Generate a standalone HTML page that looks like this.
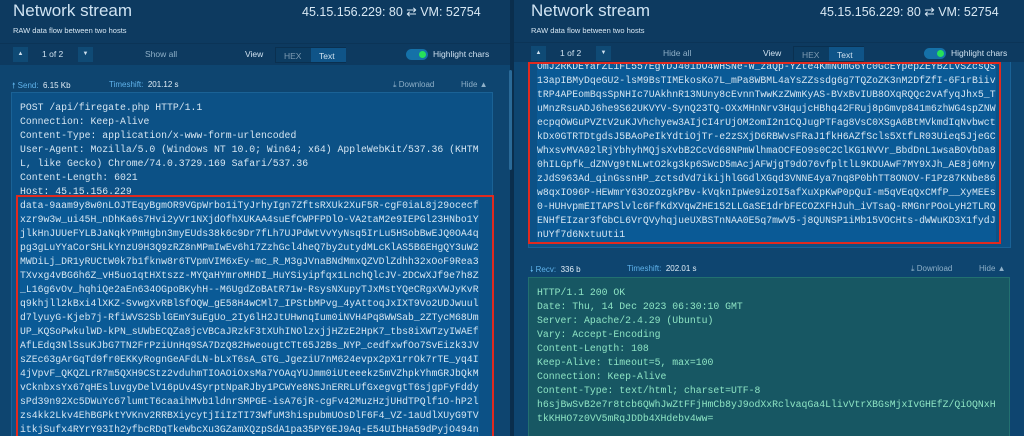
<!DOCTYPE html><html><head><meta charset="utf-8"><style>
*{margin:0;padding:0;box-sizing:border-box}
body{width:1024px;height:436px;overflow:hidden;background:#0a2e4d;font-family:"Liberation Sans",sans-serif;position:relative}
.p{position:absolute;top:0;height:436px;background:#0d3a60;overflow:hidden}
.t{position:absolute;left:13px;top:1px;font-size:17px;color:#cfe3f2;white-space:nowrap}
.s{position:absolute;left:13px;top:26px;font-size:7.5px;color:#d8e8f4}
.ip{position:absolute;top:4px;font-size:12.5px;color:#d8e8f4;white-space:nowrap}
.tb{position:absolute;left:0;right:0;top:43px;height:22px;background:#0d3a60;border-top:1px solid #0b3457;z-index:2}
.tb span{position:absolute;top:5px;font-size:8.5px;color:#d0e2f0}
.btn{position:absolute;top:3px;width:15px;height:15px;background:#0f4a75;color:#cfe0ee;font-size:6px;text-align:center;line-height:15px}
.seg{position:absolute;top:3px;height:16px;border:1px solid #0a3050;background:#0c3c62;font-size:8.5px}
.tog{position:absolute;top:5px;width:22px;height:11px;border-radius:6px;background:#1571a8}
.tog:after{content:"";position:absolute;right:2px;top:2px;width:7px;height:7px;border-radius:50%;background:#27e05a}
.body{position:absolute;left:0;right:0;top:65px;bottom:0;background:#0e4570;overflow:hidden}
.hdr{position:absolute;font-size:8px;color:#5fb2ea}
.hdr b{color:#e2eef7;font-weight:normal}
.code{position:absolute;font-family:"Liberation Mono",monospace;font-size:9.8px;line-height:14px;white-space:pre;color:#d6e6f2;padding:8px 0 0 8px;overflow:hidden}
.blue{background:#0c5186;border:1px solid #1a6296}
.red{position:absolute;border:2px solid #e02a1f}
.hl{background:#0a5a96;display:inline-block}
.grn{background:#175763;border:1px solid #227070;color:#8de3c3}
.sb{position:absolute;width:3px;background:#2a6a98;border-radius:2px}
</style></head><body>
<div class="p" style="left:0;width:510px">
<div class="t">Network stream</div><div class="s">RAW data flow between two hosts</div>
<div class="ip" style="left:302px">45.15.156.229: 80 ⇄ VM: 52754</div>
<div class="tb">
<div class="btn" style="left:13px">▲</div><span style="left:42px">1 of 2</span><div class="btn" style="left:78px">▼</div>
<span style="left:145px;color:#8fb0c8">Show all</span><span style="left:245px">View</span>
<div class="seg" style="left:275px;width:71px"><span style="left:8px;top:3px;color:#7f9cb3">HEX</span><span style="left:35px;top:0;height:14px;width:35px;background:#0f5488;padding:3px 0 0 8px">Text</span></div>
<div class="tog" style="left:406px"></div><span style="left:433px">Highlight chars</span>
</div>
<div class="body">
<div class="hdr" style="left:12px;top:15px">🠕 Send: &nbsp;<b>6.15 Kb</b></div>
<div class="hdr" style="left:109px;top:15px">Timeshift: &nbsp;<b>201.12 s</b></div>
<div class="hdr" style="left:393px;top:15px;color:#8fb0c8">⤓ Download</div>
<div class="hdr" style="left:461px;top:15px;color:#8fb0c8">Hide ▲</div>
<div class="code blue" style="left:11px;top:27px;width:482px;height:360px">POST /api/firegate.php HTTP/1.1
Connection: Keep-Alive
Content-Type: application/x-www-form-urlencoded
User-Agent: Mozilla/5.0 (Windows NT 10.0; Win64; x64) AppleWebKit/537.36 (KHTM
L, like Gecko) Chrome/74.0.3729.169 Safari/537.36
Content-Length: 6021
Host: 45.15.156.229
<span class="hl">data-9aam9y8w0nLOJTEqyBgmOR9VGpWrbo1iTyJrhyIgn7ZftsRXUk2XuF5R-cgF0iaL8j29ocecf
xzr9w3w_ui45H_nDhKa6s7Hvi2yVr1NXjdOfhXUKAA4suEfCWPFPDlO-VA2taM2e9IEPGl23HNbo1Y
jlkHnJUUeFYLBJaNqkYPmHgbn3myEUds38k6c9Dr7fLh7UJPdWtVvYyNsq5IrLu5HSobBwEJQ0OA4q
pg3gLuYYaCorSHLkYnzU9H3Q9zRZ8nMPmIwEv6h17ZzhGcl4heQ7by2utydMLcKlAS5B6EHgQY3uW2
MWDiLj_DR1yRUCtW0k7b1fknw8r6TVpmVIM6xEy-mc_R_M3gJVnaBNdMmxQZVDlZdhh32xOoF9Rea3
TXvxg4vBG6h6Z_vH5uo1qtHXtszz-MYQaHYmroMHDI_HuYSiyipfqx1LnchQlcJV-2DCwXJf9e7h8Z
_L16g6vOv_hqhiQe2aEn634OGpoBKyhH--M6UgdZoBAtR71w-RsysNXupyTJxMstYQeCRgxVWJyKvR
q9khjll2kBxi4lXKZ-SvwgXvRBlSfOQW_gE58H4wCMl7_IPStbMPvg_4yAttoqJxIXT9Vo2UDJwuul
d7lyuyG-Kjeb7j-RfiWVS2SblGEmY3uEgUo_2Iy6lH2JtUHwnqIum0iNVH4Pq8WWSab_2ZTycM68Um
UP_KQSoPwkulWD-kPN_sUWbECQZa8jcVBCaJRzkF3tXUhINOlzxjjHZzE2HpK7_tbs8iXWTzyIWAEf
AfLEdq3NlSsuKJbG7TN2FrPziUnHq9SA7DzQ82HweougtCTt65J2Bs_NYP_cedfxwfOo7SvEizk3JV
sZEc63gArGqTd9fr0EKKyRognGeAFdLN-bLxT6sA_GTG_JgeziU7nM624evpx2pX1rrOk7rTE_yq4I
4jVpvF_QKQZLrR7m5QXH9CStz2vduhmTIOAOiOxsMa7YOAqYUJmm0iUteeekz5mVZhpkYhmGRJbQkM
vCknbxsYx67qHEsluvgyDelV16pUv4SyrptNpaRJby1PCWYe8NSJnERRLUfGxegvgtT6sjgpFyFddy
sPd39n92Xc5DWuYc67lumtT6caaihMvb1ldnrSMPGE-isA76jR-cgFv42MuzHzjUHdTPQlf1O-hP2l
zs4kk2Lkv4EhBGPktYVKnv2RRBXiycytjIiIzTI73WfuM3hispubmUOsDlF6F4_VZ-1aUdlXUyG9TV
itkjSufx4RYrY93Ih2yfbcRDqTkeWbcXu3GZamXQzpSdA1pa35PY6EJ9Aq-E54UIbHa59dPyjO494n</span></div>
<div class="red" style="left:16px;top:130px;width:478px;height:320px"></div>
</div></div>
<div class="p" style="left:514px;width:510px">
<div class="t" style="left:17px">Network stream</div><div class="s" style="left:17px">RAW data flow between two hosts</div>
<div class="ip" style="left:306px">45.15.156.229: 80 ⇄ VM: 52754</div>
<div class="tb" style="top:42px">
<div class="btn" style="left:17px">▲</div><span style="left:46px">1 of 2</span><div class="btn" style="left:82px">▼</div>
<span style="left:149px;color:#8fb0c8">Hide all</span><span style="left:249px">View</span>
<div class="seg" style="left:279px;width:71px"><span style="left:8px;top:3px;color:#7f9cb3">HEX</span><span style="left:35px;top:0;height:14px;width:35px;background:#0f5488;padding:3px 0 0 8px">Text</span></div>
<div class="tog" style="left:410px"></div><span style="left:437px">Highlight chars</span>
</div>
<div class="body" style="top:62px;z-index:3">
<div class="code blue" style="left:14px;top:-10px;width:483px;height:196px;padding-top:7px"><span class="hl">OmJ2RKDEYarZL1FL557EgYDJ401bO4WHSNe-W_zaQp-YZte4KmNOmG6Yc0GcEYpepZEYBZLVSZcsQS
13apIBMyDqeGU2-lsM9BsTIMEkosKo7L_mPa8WBML4aYsZZssdg6g7TQZoZK3nM2DfZfI-6F1rBiiv
tRP4APEomBqsSpNHIc7UAkhnR13NUny8cEvnnTwwKzZWmKyAS-BVxBvIUB8OXqRQQc2vAfyqJhx5_T
uMnzRsuADJ6he9S62UKVYV-SynQ23TQ-OXxMHnNrv3HqujcHBhq42FRuj8pGmvp841m6zhWG4spZNW
ecpqOWGuPVZtV2uKJVhchyew3AIjCI4rUjOM2omI2n1CQJugPTFag8VsC0XSgA6BtMVkmdIqNvbwct
kDx0GTRTDtgdsJ5BAoPeIkYdtiOjTr-e2zSXjD6RBWvsFRaJ1fkH6AZfScls5XtfLR03Uieq5JjeGC
WhxsvMVA92lRjYbhyhMQjsXvbB2CcVd68NPmWlhmaOCFEO9s0C2ClKG1NVVr_BbdDnL1wsaBOVbDa8
0hILGpfk_dZNVg9tNLwtO2kg3kp6SWcD5mAcjAFWjgT9dO76vfpltlL9KDUAwF7MY9XJh_AE8j6Mny
zJdS963Ad_qinGssnHP_zctsdVd7ikijhlGGdlXGqd3VNNE4ya7nq8P0bhTT8ONOV-F1Pz87KNbe86
w8qxIO96P-HEWmrY63OzOzgkPBv-kVqknIpWe9izOI5afXuXpKwP0pQuI-m5qVEqQxCMfP__XyMEEs
0-HUHvpmEITAPSlvlc6FfKdXVqwZHE152LLGaSE1drbFECOZXFHJuh_iVTsaQ-RMGnrPOoLyH2TLRQ
ENHfEIzar3fGbCL6VrQVyhqjueUXBSTnNAA0E5q7mwV5-j8QUNSP1iMb15VOCHts-dWWuKD3X1fydJ
nUYf7d6NxtuUti1</span></div>
<div class="red" style="left:14px;top:0px;width:473px;height:182px"></div>
<div class="hdr" style="left:16px;top:202px">🠗 Recv: &nbsp;<b>336 b</b></div>
<div class="hdr" style="left:113px;top:202px">Timeshift: &nbsp;<b>202.01 s</b></div>
<div class="hdr" style="left:397px;top:202px;color:#8fb0c8">⤓ Download</div>
<div class="hdr" style="left:465px;top:202px;color:#8fb0c8">Hide ▲</div>
<div class="code grn" style="left:14px;top:215px;width:482px;height:160px;color:#8de3c3">HTTP/1.1 200 OK
Date: Thu, 14 Dec 2023 06:30:10 GMT
Server: Apache/2.4.29 (Ubuntu)
Vary: Accept-Encoding
Content-Length: 108
Keep-Alive: timeout=5, max=100
Connection: Keep-Alive
Content-Type: text/html; charset=UTF-8
h6sjBwSvB2e7r8tcb6QWhJwZtFFjHmCb8yJ9odXxRclvaqGa4LlivVtrXBGsMjxIvGHEfZ/QiOQNxH
tkKHHO7z0VV5mRqJDDb4XHdebv4ww=</div>
</div></div>
<div class="sb" style="left:509px;top:70px;height:100px"></div>
</body></html>
